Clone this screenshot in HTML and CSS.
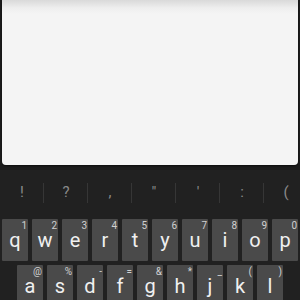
FILE: index.html
```html
<!DOCTYPE html>
<html>
<head>
<meta charset="utf-8">
<link rel="stylesheet" href="styles.css">
</head>
<body>
<div class="screen">
  <div class="panel"></div>
  <div class="keyboard">
    <div class="suggestions">
      <span class="sug">!</span><span class="sep"></span>
      <span class="sug">?</span><span class="sep"></span>
      <span class="sug">,</span><span class="sep"></span>
      <span class="sug">"</span><span class="sep"></span>
      <span class="sug">'</span><span class="sep"></span>
      <span class="sug">:</span><span class="sep"></span>
      <span class="sug">(</span>
    </div>
    <div class="row row1">
      <div class="key"><span class="hint">1</span><span class="ch">q</span></div>
      <div class="key"><span class="hint">2</span><span class="ch">w</span></div>
      <div class="key"><span class="hint">3</span><span class="ch">e</span></div>
      <div class="key"><span class="hint">4</span><span class="ch">r</span></div>
      <div class="key"><span class="hint">5</span><span class="ch">t</span></div>
      <div class="key"><span class="hint">6</span><span class="ch">y</span></div>
      <div class="key"><span class="hint">7</span><span class="ch">u</span></div>
      <div class="key"><span class="hint">8</span><span class="ch">i</span></div>
      <div class="key"><span class="hint">9</span><span class="ch">o</span></div>
      <div class="key"><span class="hint">0</span><span class="ch">p</span></div>
    </div>
    <div class="row row2">
      <div class="key"><span class="hint">@</span><span class="ch">a</span></div>
      <div class="key"><span class="hint">%</span><span class="ch">s</span></div>
      <div class="key"><span class="hint">-</span><span class="ch">d</span></div>
      <div class="key"><span class="hint">=</span><span class="ch">f</span></div>
      <div class="key"><span class="hint">&amp;</span><span class="ch">g</span></div>
      <div class="key"><span class="hint">*</span><span class="ch">h</span></div>
      <div class="key"><span class="hint">_</span><span class="ch">j</span></div>
      <div class="key"><span class="hint">(</span><span class="ch">k</span></div>
      <div class="key"><span class="hint">)</span><span class="ch">l</span></div>
    </div>
  </div>
</div>
</body>
</html>
```
FILE: styles.css
```css
html, body {
  margin: 0;
  padding: 0;
  background: #1b1b1b;
  overflow: hidden;
}
.screen {
  width: 300px;
  height: 300px;
  overflow: hidden;
  font-family: Roboto, "Liberation Sans", sans-serif;
}
.panel {
  height: 165px;
  margin: 0 2px 0 2px;
  background: linear-gradient(to bottom, #d9d9d9 0px, #eeeeee 8px, #f4f4f4 14px, #f4f4f4 100%);
  border-radius: 0 0 4px 4px;
  box-shadow: 0 1px 2px rgba(0,0,0,0.6);
}
.keyboard {
  margin-top: 5px;
  background: #212121;
  height: 130px;
}
.suggestions {
  display: flex;
  align-items: center;
  height: 45px;
  width: 308px;
}
.sug {
  width: 44px;
  text-align: center;
  color: #8a8a8a;
  font-size: 15px;
  line-height: 45px;
  margin-right: -1px;
}
.sep {
  width: 1px;
  height: 20px;
  background: #363636;
}
.row {
  display: flex;
  gap: 4px;
}
.row1 {
  padding: 4px 0 0 2px;
}
.row2 {
  padding: 4px 0 0 17px;
}
.key {
  position: relative;
  width: 26px;
  height: 42px;
  flex: none;
  background: #4a4a4a;
  border-radius: 1px;
  display: flex;
  justify-content: center;
  align-items: flex-start;
}
.ch {
  color: #f0f0f0;
  font-size: 20px;
  line-height: 20px;
  margin-top: 11px;
}
.hint {
  position: absolute;
  top: 2px;
  right: 1px;
  font-size: 10px;
  line-height: 9px;
  color: #d0d0d0;
}
```
